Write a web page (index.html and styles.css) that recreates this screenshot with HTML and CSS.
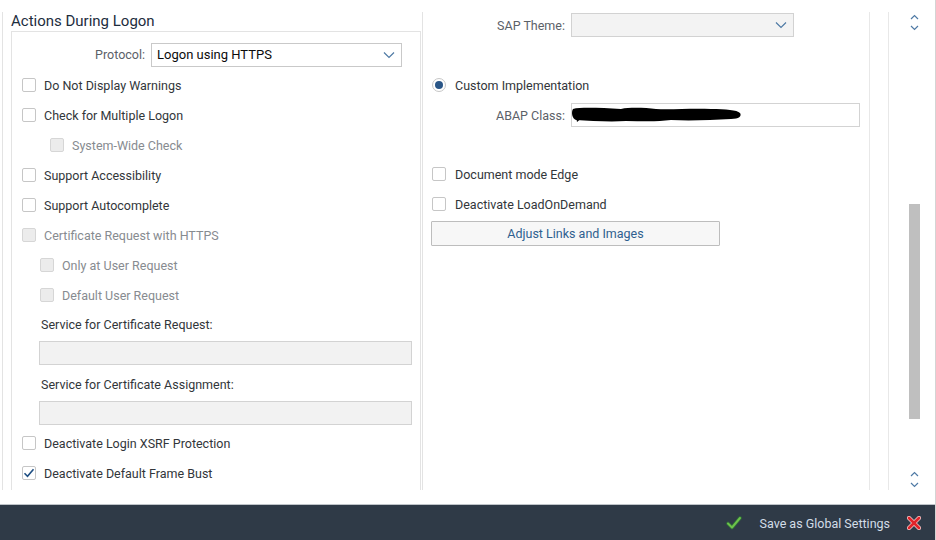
FILE: index.html
```html
<!DOCTYPE html>
<html lang="en">
<head>
<meta charset="utf-8">
<title>Actions During Logon</title>
<link rel="stylesheet" href="styles.css">
</head>
<body>
<div class="page">
  <div class="content">
    <section class="left-col">
      <h2 class="section-title">Actions During Logon</h2>
      <div class="panel">
        <div class="form-row proto-row">
          <label class="form-label">Protocol:</label>
          <div class="select select-proto">
            <span class="select-value">Logon using HTTPS</span>
            <svg class="chev" width="12" height="8" viewBox="0 0 12 8"><path d="M1 1.5 L6 6.5 L11 1.5" fill="none" stroke="#4f7aa5" stroke-width="1.2"/></svg>
          </div>
        </div>
        <div class="cb-row"><span class="cb"></span><span class="cb-text">Do Not Display Warnings</span></div>
        <div class="cb-row"><span class="cb"></span><span class="cb-text">Check for Multiple Logon</span></div>
        <div class="cb-row indent-2"><span class="cb cb-disabled"></span><span class="cb-text text-disabled">System-Wide Check</span></div>
        <div class="cb-row"><span class="cb"></span><span class="cb-text">Support Accessibility</span></div>
        <div class="cb-row"><span class="cb"></span><span class="cb-text">Support Autocomplete</span></div>
        <div class="cb-row"><span class="cb cb-disabled"></span><span class="cb-text text-disabled">Certificate Request with HTTPS</span></div>
        <div class="cb-row indent-1"><span class="cb cb-disabled"></span><span class="cb-text text-disabled">Only at User Request</span></div>
        <div class="cb-row indent-1"><span class="cb cb-disabled"></span><span class="cb-text text-disabled">Default User Request</span></div>
        <div class="field-label">Service for Certificate Request:</div>
        <div class="text-input input-disabled"></div>
        <div class="field-label field-label-2">Service for Certificate Assignment:</div>
        <div class="text-input input-disabled"></div>
        <div class="cb-row cb-row-after"><span class="cb"></span><span class="cb-text">Deactivate Login XSRF Protection</span></div>
        <div class="cb-row"><span class="cb cb-checked"><svg width="12" height="10" viewBox="0 0 12 10"><path d="M1.5 5.2 L4.5 8.2 L10.5 1.2" fill="none" stroke="#1f4f83" stroke-width="1.6"/></svg></span><span class="cb-text">Deactivate Default Frame Bust</span></div>
      </div>
    </section>

    <section class="right-col">
      <div class="form-row theme-row">
        <label class="form-label form-label-r">SAP Theme:</label>
        <div class="select select-theme">
          <span class="select-value"></span>
          <svg class="chev" width="12" height="8" viewBox="0 0 12 8"><path d="M1 1.5 L6 6.5 L11 1.5" fill="none" stroke="#4f7aa5" stroke-width="1.2"/></svg>
        </div>
      </div>
      <div class="radio-row"><span class="radio"><span class="radio-dot"></span></span><span class="cb-text">Custom Implementation</span></div>
      <div class="form-row abap-row">
        <label class="form-label form-label-r">ABAP Class:</label>
        <div class="text-input abap-input">
          <svg class="redact" width="172" height="18" viewBox="0 0 172 18"><path d="M2 3 C10 1 30 2 50 3 C60 1 75 2 85 3 C100 4 120 2 140 3 C155 3 166 4 169 7 C171 10 168 13 160 13 C140 14 120 15 100 14 C85 16 70 15 55 15 C40 16 20 15 5 14 C1 13 0 6 2 3 Z" fill="#000"/><path d="M4 5 L6 16 L12 11 Z" fill="#000"/></svg>
        </div>
      </div>
      <div class="cb-row cb-row-r first-r"><span class="cb"></span><span class="cb-text">Document mode Edge</span></div>
      <div class="cb-row cb-row-r"><span class="cb"></span><span class="cb-text">Deactivate LoadOnDemand</span></div>
      <button class="btn">Adjust Links and Images</button>
    </section>

    <div class="spacer-col"></div>

    <div class="scroll-col">
      <div class="arrows">
        <svg width="9" height="6" viewBox="0 0 9 6"><path d="M1 5 L4.5 1.5 L8 5" fill="none" stroke="#4f7aa5" stroke-width="1.2"/></svg>
        <svg width="9" height="6" viewBox="0 0 9 6"><path d="M1 1 L4.5 4.5 L8 1" fill="none" stroke="#4f7aa5" stroke-width="1.2"/></svg>
      </div>
      <div class="track"><div class="thumb"></div></div>
      <div class="arrows">
        <svg width="9" height="6" viewBox="0 0 9 6"><path d="M1 5 L4.5 1.5 L8 5" fill="none" stroke="#4f7aa5" stroke-width="1.2"/></svg>
        <svg width="9" height="6" viewBox="0 0 9 6"><path d="M1 1 L4.5 4.5 L8 1" fill="none" stroke="#4f7aa5" stroke-width="1.2"/></svg>
      </div>
    </div>
  </div>

  <footer class="footer">
    <svg class="ok-icon" width="16" height="14" viewBox="0 0 16 14"><path d="M2 7.5 L6 11.5 L14 2" fill="none" stroke="#2f6a3a" stroke-width="3.6" stroke-linecap="round" stroke-linejoin="round"/><path d="M2 7.5 L6 11.5 L14 2" fill="none" stroke="#6cc24a" stroke-width="2" stroke-linecap="round" stroke-linejoin="round"/></svg>
    <span class="footer-text">Save as Global Settings</span>
    <svg class="x-icon" width="14" height="14" viewBox="0 0 14 14"><path d="M2 2 L12 12 M12 2 L2 12" stroke="#f4d0d0" stroke-width="4.2" stroke-linecap="round"/><path d="M2 2 L12 12 M12 2 L2 12" stroke="#e0242a" stroke-width="2.8" stroke-linecap="round"/></svg>
  </footer>
</div>
</body>
</html>
```

FILE: styles.css
```css
* { box-sizing: border-box; }
html, body { margin: 0; padding: 0; background: #fff; }
body {
  font-family: Roboto, "Open Sans", sans-serif;
  font-size: 12.5px;
  color: #32363a;
  width: 936px;
  height: 540px;
  overflow: hidden;
}
.page { display: flex; flex-direction: column; height: 540px; border-right: 1px solid #d4d4d4; }

.content {
  display: flex;
  height: 504px;
  padding-top: 12px;
  padding-bottom: 14px;
}

/* left column */
.left-col {
  margin-left: 2px;
  border-left: 1px solid #e3e3e3;
  padding-left: 8px;
  width: 419px;
  display: flex;
  flex-direction: column;
}
.section-title {
  margin: 0;
  font-size: 15px;
  font-weight: normal;
  line-height: 19px;
  color: #1d2d3e;
}
.panel {
  flex: 1;
  border: 1px solid #e3e3e3;
  border-bottom: none;
  padding: 7px 9px 0 10px;
  overflow: hidden;
}
.form-row { display: flex; align-items: center; height: 30px; }
.proto-row { height: 31px; }
.form-label {
  width: 123px;
  text-align: right;
  margin-right: 6px;
  color: #5b6168;
  font-size: 12.5px;
}
.select {
  height: 24px;
  border: 1px solid #c9c9c9;
  display: flex;
  align-items: center;
  justify-content: space-between;
  padding: 0 6px 0 5px;
}
.select-proto { width: 251px; background: #fff; }
.select-value { color: #0b0b0b; font-size: 13px; }
.chev { display: block; }

.cb-row { display: flex; align-items: center; height: 30px; }
.cb {
  width: 14px;
  height: 14px;
  border: 1px solid #c6c6c6;
  border-radius: 2px;
  background: #fff;
  margin-right: 8px;
  display: flex;
  align-items: center;
  justify-content: center;
  flex: none;
}
.cb-disabled { background: #ececec; border-color: #d6d6d6; }
.cb-checked svg { display: block; }
.cb-text { font-size: 12.5px; color: #32363a; }
.text-disabled { color: #878b90; }
.indent-1 { padding-left: 18px; }
.indent-2 { padding-left: 28px; }

.field-label {
  height: 30px;
  line-height: 30px;
  padding-left: 19px;
  font-size: 12.5px;
  color: #32363a;
}
.field-label-2 { margin-top: 5px; }
.text-input {
  height: 24px;
  border: 1px solid #d3d3d3;
}
.input-disabled {
  margin-left: 17px;
  width: 373px;
  background: #f2f2f2;
  margin-top: 1px;
}
.cb-row-after { margin-top: 3px; }

/* right column */
.right-col {
  margin-left: 1px;
  width: 448px;
  border-left: 1px solid #e3e3e3;
  border-right: 1px solid #e8e8e8;
  display: flex;
  flex-direction: column;
  align-items: flex-start;
}
.theme-row { height: 26px; }
.form-label-r { width: 142px; }
.select-theme { width: 223px; background: #f3f3f3; border-color: #d2d2d2; }
.radio-row { display: flex; align-items: center; height: 30px; margin-top: 32px; padding-left: 9px; }
.radio {
  width: 14px;
  height: 14px;
  border: 1px solid #c6c6c6;
  border-radius: 50%;
  margin-right: 9px;
  display: flex;
  align-items: center;
  justify-content: center;
}
.radio-dot { width: 8px; height: 8px; border-radius: 50%; background: #2a5687; }
.abap-row { height: 30px; }
.abap-input {
  width: 289px;
  height: 24px;
  background: #fff;
  display: flex;
  align-items: center;
  padding-left: 0;
}
.redact { display: block; margin-left: -1px; }
.cb-row-r { padding-left: 9px; }
.cb-row-r .cb { margin-right: 9px; }
.first-r { margin-top: 29px; }
.btn {
  margin-left: 8px;
  margin-top: 2px;
  width: 289px;
  height: 25px;
  background: #f7f7f7;
  border: 1px solid #bdbdbd;
  border-radius: 1px;
  color: #2f5f8f;
  font-family: Roboto, "Open Sans", sans-serif;
  font-size: 12.5px;
  padding: 0;
}

.spacer-col {
  width: 19px;
  border-right: 1px solid #e8e8e8;
}

/* scroll column */
.scroll-col {
  flex: 1;
  display: flex;
  flex-direction: column;
  align-items: center;
  padding-left: 4px;
}
.arrows {
  display: flex;
  flex-direction: column;
  align-items: center;
  gap: 5px;
  padding-top: 2px;
  height: 26px;
}
.arrows svg { display: block; }
.track { flex: 1; width: 11px; }
.thumb { width: 11px; height: 215px; margin-top: 166px; background: #bfbfbf; }
.scroll-col .arrows:last-child { padding-top: 7px; height: 26px; }

/* footer */
.footer {
  flex: 1;
  background: #2f3a47;
  border-top: 1px solid #bfc4c9;
  display: flex;
  align-items: center;
  justify-content: flex-end;
  padding-right: 14px;
  padding-top: 1px;
}
.ok-icon { display: block; margin-right: 18px; }
.footer-text { color: #d3dde8; font-size: 12.5px; margin-right: 17px; }
.x-icon { display: block; }
```
